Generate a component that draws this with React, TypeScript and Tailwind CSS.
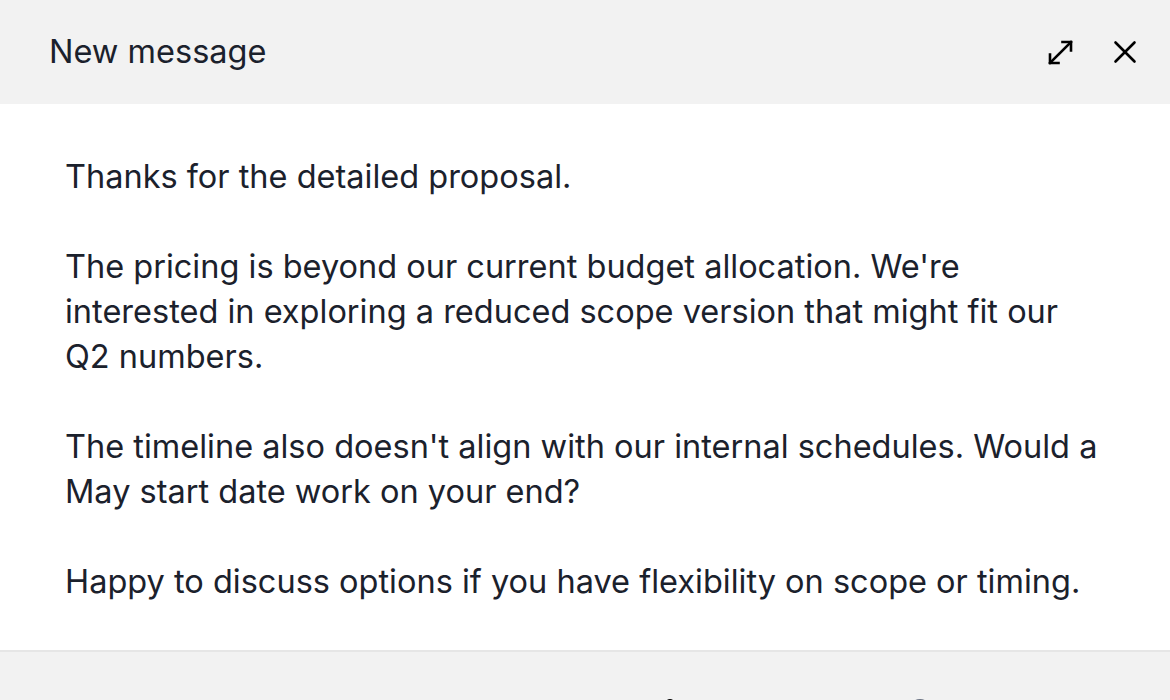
import { Paperclip, Smile } from "lucide-react";

const paragraphs = [
  "Thanks for the detailed proposal.",
  "The pricing is beyond our current budget allocation. We're interested in exploring a reduced scope version that might fit our Q2 numbers.",
  "The timeline also doesn't align with our internal schedules. Would a May start date work on your end?",
  "Happy to discuss options if you have flexibility on scope or timing.",
];

function ExpandIcon() {
  return (
    <svg width="29" height="29" viewBox="0 0 29 29" fill="none" stroke="black" strokeWidth="2.6" strokeLinecap="square">
      <path d="M4 25 L25 4" />
      <path d="M16.5 4 H25 V12.5" />
      <path d="M4 16.5 V25 H12.5" />
    </svg>
  );
}

function CloseIcon() {
  return (
    <svg width="24" height="24" viewBox="0 0 24 24" fill="none" stroke="black" strokeWidth="2.6" strokeLinecap="round">
      <path d="M2.5 2.5 L21.5 21.5" />
      <path d="M21.5 2.5 L2.5 21.5" />
    </svg>
  );
}

export default function App() {
  return (
    <div className="flex h-[700px] w-[1170px] flex-col overflow-hidden bg-white font-['Inter',sans-serif] text-[#1b212c]">
      <header className="flex h-[104px] shrink-0 items-center justify-between bg-[#f2f2f2] pl-[49px] pr-[33px]">
        <h2 className="text-[32.5px] leading-none">New message</h2>
        <div className="flex items-center gap-[38px]">
          <button>
            <ExpandIcon />
          </button>
          <button>
            <CloseIcon />
          </button>
        </div>
      </header>
      <main className="flex shrink-0 flex-col gap-[45px] pb-[46px] pl-[65px] pr-[60px] pt-[50px] text-[32.5px] leading-[45px]">
        {paragraphs.map((p) => (
          <p key={p}>{p}</p>
        ))}
      </main>
      <footer className="flex flex-1 items-start gap-[230px] border-t-2 border-[#e6e6e6] bg-[#f2f2f2] pl-[654px] pt-[46px]">
        <Paperclip className="h-[24px] w-[24px] text-black" />
        <Smile className="h-[24px] w-[24px] text-gray-500" />
      </footer>
    </div>
  );
}
